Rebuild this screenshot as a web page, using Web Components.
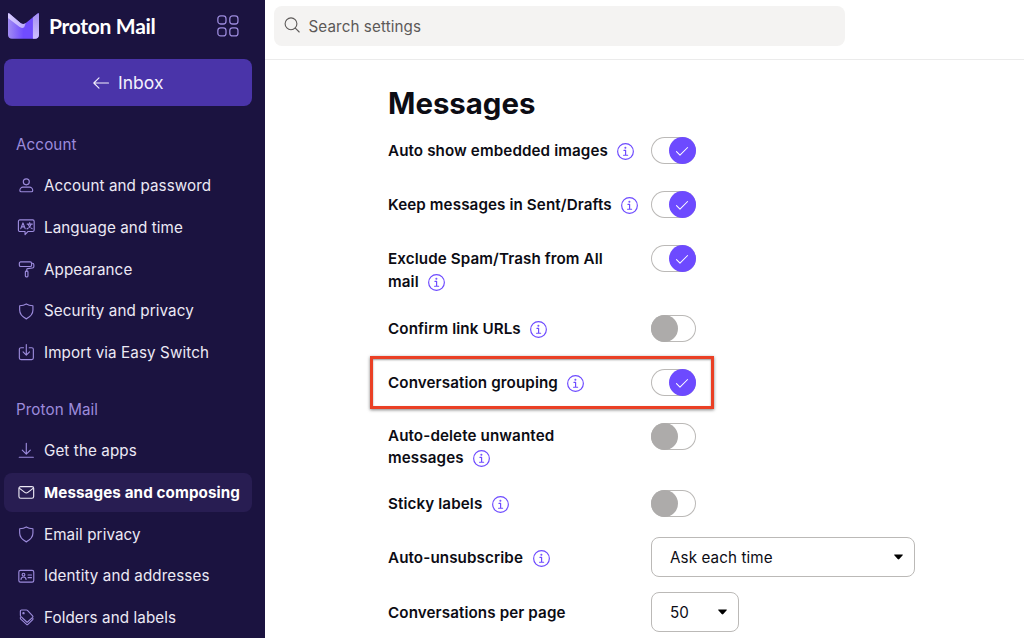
<!DOCTYPE html>
<html lang="en">
<head>
<meta charset="utf-8">
<title>Messages and composing</title>
<style>
  html, body { margin: 0; height: 100%; overflow: hidden; }
  body { font-family: Inter, "Liberation Sans", sans-serif; font-size: 15.2px; letter-spacing: .1px; color: #0c0c14; background: #fff; }
</style>
</head>
<body>
<settings-app></settings-app>

<script>
const icons = {
  grid: `<rect x=".6" y=".6" width="5.8" height="5.8" rx="2"/><rect x="9.1" y=".6" width="5.8" height="5.8" rx="2"/><rect x=".6" y="9.1" width="5.8" height="5.8" rx="2"/><rect x="9.1" y="9.1" width="5.8" height="5.8" rx="2"/>`,
  back: `<path d="M15.5 8H.8M6 2.8.8 8 6 13.2"/>`,
  user: `<circle cx="8" cy="4.7" r="2.9"/><path d="M4.8 9.7h6.4c1.5 0 3 1.6 3 3.2 0 .8-.5 1.3-1.3 1.3H3.1c-.8 0-1.3-.5-1.3-1.3 0-1.6 1.5-3.2 3-3.2Z"/>`,
  language: `<path d="M1.8.9h12.4c.8 0 1.4.6 1.4 1.4v8.4c0 .8-.6 1.4-1.4 1.4H9.5L6.8 15v-2.9h-5c-.8 0-1.4-.6-1.4-1.4V2.3C.4 1.5 1 .9 1.8.9Z"/><path d="m2.7 9.3 2.1-5.5 2.1 5.5M3.4 7.6h2.8M8.8 4.9h5M11.3 3.5v1.4M12.7 5c-.5 2-1.9 3.6-4 4.5M9.8 5.2c.6 2 1.9 3.5 3.9 4.2"/>`,
  roller: `<rect x="1.3" y=".9" width="11.8" height="4.4" rx="1.3"/><path d="M13.1 2.2h.7c1 0 1.5.7 1.5 1.5v1.6c0 .8-.5 1.4-1.3 1.5L9.3 7.4c-.6.1-.9.5-.9 1.1v1.3"/><rect x="7.1" y="9.8" width="2.5" height="5.5" rx=".8"/>`,
  shield: `<path d="M8 .9c2 1.2 4 1.6 6.4 1.8v4.1c0 4-2.4 6.500-6.400 8.500-4-2-6.400-4.500-6.400-8.500V2.700C4 2.500 6 2.100 8 .9Z"/>`,
  import: `<path d="M5.3 3.6H2.9C2 3.6 1.3 4.2 1.3 5.1v8.500c0 .9.7 1.500 1.600 1.500h10.300c.9 0 1.600-.6 1.600-1.500V5.100c0-.9-.7-1.500-1.600-1.500h-2.400M8 .6v9.900M4.900 7.600 8 10.700l3.100-3.100"/>`,
  download: `<path d="M8 1.3v10.300M4.100 7.800 8 11.700l3.900-3.900M1.200 14.700h13.600"/>`,
  mail: `<rect x=".9" y="2.500" width="14.200" height="11.200" rx="1.700"/><path d="m1.500 4.200 5 3.900c1 .8 2 .8 3 0l5-3.900"/>`,
  card: `<rect x=".8" y="2.300" width="14.400" height="11.300" rx="1.600"/><circle cx="5.300" cy="6.400" r="1.300"/><path d="M2.900 11c.2-1.500 1-2.300 2.400-2.300s2.300.8 2.500 2.300M9.700 6.800h3.300M9.700 9.300h3.300"/>`,
  tags: `<path d="M2.300 2.100c0-.7.400-1.100 1.100-1.100h4.700c.4 0 .7.100 1 .4l5 5.300c.4.400.4.900 0 1.300l-4.600 4.300c-.4.400-.9.400-1.300 0L2.700 7.100c-.3-.3-.4-.6-.4-1Z"/><path d="M2.300 8.200v.6c0 .4.100.7.400 1l5.500 5c.4.400.9.400 1.300 0l4.700-4.500c.4-.4.400-.8.100-1.300"/><circle cx="5.300" cy="4" r=".6"/>`,
  search: `<circle cx="7" cy="6.800" r="5.900"/><path d="m11.300 11.200 3.900 3.800"/>`,
  info: `<circle cx="8" cy="8" r="7.400"/><path d="M6.500 6.900H8.100v4.500M6.200 11.500h3.800"/><circle cx="7.900" cy="4.500" r=".4"/>`,
  check: `<path d="m1.700 8.700 4 4L14.400 4"/>`
};

class UiIcon extends HTMLElement {
  constructor() {
    super();
    this.attachShadow({ mode: "open" });
  }
  connectedCallback() {
    this.shadowRoot.innerHTML = `
      <style>
        :host { display: inline-block; width: 16.6px; height: 16.6px; flex: none; }
        svg { display: block; width: 100%; height: 100%; overflow: visible; stroke-width: var(--stroke, 1.1); }
      </style>
      <svg viewBox="0 0 16 16" fill="none" stroke="currentColor" stroke-linecap="round" stroke-linejoin="round">${icons[this.getAttribute("name")]}</svg>`;
  }
}
customElements.define("ui-icon", UiIcon);

class ProtonLogo extends HTMLElement {
  constructor() {
    super();
    this.attachShadow({ mode: "open" });
    this.shadowRoot.innerHTML = `
      <style>
        :host { display: flex; align-items: center; color: #fff; }
        svg { width: 31px; height: 26px; margin-right: 10px; }
        span { font: 700 21px/26px Lato, sans-serif; letter-spacing: -.3px; white-space: nowrap; }
      </style>
      <svg viewBox="0 0 31 26">
        <defs>
          <linearGradient id="body" x1="0" y1="0" x2="1" y2="0"><stop offset="0" stop-color="#a18bf2"/><stop offset=".5" stop-color="#704cff"/></linearGradient>
          <linearGradient id="flap" x1="0" y1="0" x2="1" y2="0"><stop offset="0" stop-color="#d8ccff"/><stop offset="1" stop-color="#b9a8fa"/></linearGradient>
          <linearGradient id="side" x1="0" y1="0" x2="0" y2="1"><stop offset="0" stop-color="#a48ef2"/><stop offset="1" stop-color="#cdbfff"/></linearGradient>
        </defs>
        <path fill="url(#body)" d="M0 1C0 .2.7 0 1.3.5L12.5 10c1.7 1.400 3.700 1.400 5.300 0L29.700.5c.6-.5 1.300-.3 1.300.5v21c0 2.200-1.700 3.700-3.900 3.700H3.900C1.700 25.700 0 24.200 0 22Z"/>
        <path fill="url(#flap)" d="M0 1C0 .2.7 0 1.3.5L12.5 10c1.700 1.400 3.700 1.400 5.300 0l-1.600 4.300c-1.600 1-3.300.8-4.900-.5L0 5Z"/>
        <path fill="url(#side)" d="M24.900 4.300 29.700.5c.6-.5 1.300-.3 1.300.5v21c0 2.200-1.700 3.700-3.900 3.700h-2.200Z"/>
      </svg>
      <span>Proton Mail</span>`;
  }
}
customElements.define("proton-logo", ProtonLogo);

class NavItem extends HTMLElement {
  constructor() {
    super();
    this.attachShadow({ mode: "open" });
  }
  connectedCallback() {
    this.shadowRoot.innerHTML = `
      <style>
        :host { display: flex; align-items: center; height: 39.7px; margin: 0 13px 2px 4px; padding-left: 14px; box-sizing: border-box; border-radius: 8px; color: #ece9f5; white-space: nowrap; }
        :host([active]) { background: #281d52; color: #fff; font-weight: 700; }
        ui-icon { color: #9c8bdc; margin: 0 9.9px 0 -.5px; }
        :host([active]) ui-icon { color: #ece9f5; }
      </style>
      <ui-icon name="${this.getAttribute("icon")}"></ui-icon><slot></slot>`;
  }
}
customElements.define("nav-item", NavItem);

class NavSection extends HTMLElement {
  constructor() {
    super();
    this.attachShadow({ mode: "open" });
  }
  connectedCallback() {
    this.shadowRoot.innerHTML = `
      <style>
        :host { display: block; }
        h2 { margin: 0 0 0 16px; padding: 8px 0 9.9px; font-size: inherit; font-weight: 400; line-height: 22px; color: #9c8bdc; }
      </style>
      <h2>${this.getAttribute("heading")}</h2>
      <slot></slot>`;
  }
}
customElements.define("nav-section", NavSection);

class SideBar extends HTMLElement {
  constructor() {
    super();
    this.attachShadow({ mode: "open" });
    this.shadowRoot.innerHTML = `
      <style>
        :host { display: block; width: 265px; height: 100%; background: #1b1340; overflow: hidden; flex: none; }
        .top { display: flex; justify-content: space-between; align-items: center; height: 52px; padding: 0 26px 7px 8px; }
        .top ui-icon { width: 22.5px; height: 22.5px; color: #9c8bdc; --stroke: .9; }
        button { display: flex; align-items: center; justify-content: center; gap: 9.5px; width: 248px; height: 47px; margin: 0 0 20px 4px; padding: 0; border: 0; border-radius: 8px; background: #4a34a9; color: #f3f0fc; font: 400 17.5px Inter, sans-serif; }
        button ui-icon { width: 16px; height: 16px; }
        nav-section + nav-section { margin-top: 18.7px; }
      </style>
      <div class="top"><proton-logo></proton-logo><ui-icon name="grid"></ui-icon></div>
      <button><ui-icon name="back"></ui-icon><span>Inbox</span></button>
      <nav>
        <nav-section heading="Account">
          <nav-item icon="user">Account and password</nav-item>
          <nav-item icon="language">Language and time</nav-item>
          <nav-item icon="roller">Appearance</nav-item>
          <nav-item icon="shield">Security and privacy</nav-item>
          <nav-item icon="import">Import via Easy Switch</nav-item>
        </nav-section>
        <nav-section heading="Proton Mail">
          <nav-item icon="download">Get the apps</nav-item>
          <nav-item icon="mail" active>Messages and composing</nav-item>
          <nav-item icon="shield">Email privacy</nav-item>
          <nav-item icon="card">Identity and addresses</nav-item>
          <nav-item icon="tags">Folders and labels</nav-item>
        </nav-section>
      </nav>`;
  }
}
customElements.define("side-bar", SideBar);

class SearchBar extends HTMLElement {
  constructor() {
    super();
    this.attachShadow({ mode: "open" });
    this.shadowRoot.innerHTML = `
      <style>
        :host { display: block; height: 60px; padding: 6.4px 0 0 9px; box-sizing: border-box; border-bottom: 1px solid #ebebeb; }
        div { display: flex; align-items: center; width: 571px; height: 39.3px; padding-left: 10px; box-sizing: border-box; border-radius: 8px; background: #f4f3f2; color: #5c5958; }
        ui-icon { margin: -2px 8.5px 0 0; width: 16px; height: 16px; }
      </style>
      <div><ui-icon name="search"></ui-icon><span>Search settings</span></div>`;
  }
}
customElements.define("search-bar", SearchBar);

class ToggleSwitch extends HTMLElement {
  constructor() {
    super();
    this.attachShadow({ mode: "open" });
    this.shadowRoot.innerHTML = `
      <style>
        :host { display: flex; width: 44.5px; height: 27px; box-sizing: border-box; border-radius: 14px; box-shadow: inset 0 0 0 1px #bbb9b7; background: #fff; }
        span { display: grid; place-items: center; width: 27px; height: 27px; border-radius: 50%; background: #adabaa; color: #fff; }
        ui-icon { display: none; width: 14px; height: 14px; --stroke: 1.2; }
        :host([on]) { justify-content: flex-end; }
        :host([on]) span { background: #6d4aff; }
        :host([on]) ui-icon { display: block; }
      </style>
      <span><ui-icon name="check"></ui-icon></span>`;
  }
}
customElements.define("toggle-switch", ToggleSwitch);

class SelectBox extends HTMLElement {
  constructor() {
    super();
    this.attachShadow({ mode: "open" });
    this.shadowRoot.innerHTML = `
      <style>
        :host { display: flex; align-items: center; justify-content: space-between; height: 40px; margin-top: -1px; padding: 0 11px 0 18px; box-sizing: border-box; border: 1px solid #bbb9b7; border-radius: 8px; }
        svg { width: 9px; height: 6px; }
      </style>
      <slot></slot>
      <svg viewBox="0 0 9 6"><path d="M.7.5h7.6c.5 0 .7.5.4.8L5.3 5c-.5.5-1.1.5-1.6 0L.3 1.3C0 1 .2.5.7.5Z"/></svg>`;
  }
}
customElements.define("select-box", SelectBox);

class SettingRow extends HTMLElement {
  constructor() {
    super();
    this.attachShadow({ mode: "open" });
  }
  connectedCallback() {
    // the info icon must never wrap away from the last word
    const words = this.getAttribute("label").split(" ");
    const last = words.pop();
    const info = this.hasAttribute("info") ? `<ui-icon name="info"></ui-icon>` : "";
    this.shadowRoot.innerHTML = `
      <style>
        :host { display: flex; position: relative; align-items: flex-start; height: var(--row, 54.2px); box-sizing: border-box; }
        label { width: 251px; margin-right: 12px; padding-top: 8px; line-height: var(--line, 23px); font-weight: 600; }
        label span { white-space: nowrap; }
        label ui-icon { width: 17px; height: 17px; margin: -4px 0 -4px 9.5px; vertical-align: 0; color: #6d4aff; }
        ::slotted(toggle-switch) { margin-top: 6px; }
        /* callout frame drawn over the row */
        :host([highlight])::after { content: ""; position: absolute; left: -18px; top: -7px; width: 344px; height: 53px; box-sizing: border-box; border: 3px solid #ea4025; box-shadow: 0 1px 3px rgba(0,0,0,.5), inset 0 1px 2px rgba(0,0,0,.4); }
      </style>
      <label>${words.join(" ")} <span>${last}${info}</span></label>
      <slot></slot>`;
  }
}
customElements.define("setting-row", SettingRow);

class MessageSettings extends HTMLElement {
  constructor() {
    super();
    this.attachShadow({ mode: "open" });
    this.shadowRoot.innerHTML = `
      <style>
        :host { display: block; padding: 24px 0 0 123px; }
        h1 { margin: 0 0 7px; font-size: 29.4px; line-height: 40px; font-weight: 700; letter-spacing: 0; }
      </style>
      <h1>Messages</h1>
      <setting-row label="Auto show embedded images" info><toggle-switch on></toggle-switch></setting-row>
      <setting-row label="Keep messages in Sent/Drafts" info><toggle-switch on></toggle-switch></setting-row>
      <setting-row label="Exclude Spam/Trash from All mail" info style="--row: 69.5px"><toggle-switch on></toggle-switch></setting-row>
      <setting-row label="Confirm link URLs" info><toggle-switch></toggle-switch></setting-row>
      <setting-row label="Conversation grouping" info highlight><toggle-switch on></toggle-switch></setting-row>
      <setting-row label="Auto-delete unwanted messages" info style="--row: 67px; --line: 22px"><toggle-switch></toggle-switch></setting-row>
      <setting-row label="Sticky labels" info><toggle-switch></toggle-switch></setting-row>
      <setting-row label="Auto-unsubscribe" info style="--row: 54.8px"><select-box style="width: 264px">Ask each time</select-box></setting-row>
      <setting-row label="Conversations per page"><select-box style="width: 88px">50</select-box></setting-row>`;
  }
}
customElements.define("message-settings", MessageSettings);

class SettingsApp extends HTMLElement {
  constructor() {
    super();
    this.attachShadow({ mode: "open" });
    this.shadowRoot.innerHTML = `
      <style>
        :host { display: flex; height: 100vh; overflow: hidden; }
        main { flex: 1; min-width: 0; }
      </style>
      <side-bar></side-bar>
      <main>
        <search-bar></search-bar>
        <message-settings></message-settings>
      </main>`;
  }
}
customElements.define("settings-app", SettingsApp);
</script>
</body>
</html>
